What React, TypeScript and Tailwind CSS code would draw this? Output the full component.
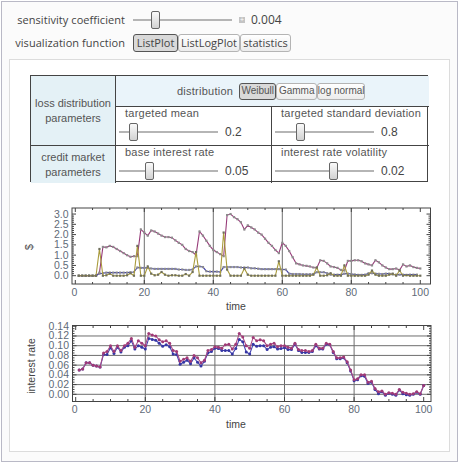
const lossY = [0,0,0,0,0,0,0.15,1.4,1.38,1.45,1.4,1.3,1.2,1.1,1,0.92,0.95,0.95,2.25,2.1,1.95,2.2,2.15,2.05,1.95,1.88,1.88,1.85,1.72,1.6,1.5,1.3,1.2,1.15,1,2.15,1.95,1.7,1.45,1.25,1.15,1.05,0.95,2.95,3,2.85,2.75,2.6,2.25,2.45,2.35,2.25,2.1,2,1.8,1.6,1.45,1.25,1.1,1.6,1.45,1.2,0.9,0.6,0.55,0.5,0.48,0.45,0.4,0.38,0.75,0.72,0.6,0.45,0.42,0.38,0.28,0.25,0.72,0.72,0.75,0.75,0.7,0.6,0.55,0.5,0.75,0.65,0.5,0.4,0.32,0.32,0.35,0.28,0.55,0.45,0.5,0.42,0.38,0.35]
const meanY = [0,0,0,0,0,0,0.1,0.12,0.15,0.15,0.15,0.15,0.15,0.15,0.15,0.17,0.18,0.4,0.38,0.38,0.38,0.35,0.33,0.33,0.33,0.33,0.33,0.33,0.33,0.3,0.3,0.28,0.28,0.3,0.45,0.45,0.42,0.22,0.2,0.2,0.2,0.18,0.42,0.42,0.42,0.42,0.42,0.4,0.4,0.4,0.36,0.36,0.34,0.32,0.32,0.32,0.32,0.32,0.32,0.3,0.3,0.1,0.08,0.08,0.08,0.07,0.07,0.07,0.08,0.17,0.17,0.17,0.12,0.05,0.05,0.05,0.05,0.1,0.1,0.08,0.06,0.04,0.04,0.05,0.12,0.12,0.1,0.09,0.08,0.1,0.1,0.06,0.05,0.05,0.05,0.04,0.05,0.05,0.05]
const spikeY = [0,0,0,0,0,0,1.3,0,0.02,0.1,0,0,0,0,0.02,0.12,0,1.45,0,0,0.45,0.1,0.02,0.05,0.18,0.05,0,0.02,0.02,0,0,0.08,0,0.18,1.15,0,0,0,0,0,0,0,2.1,0.3,0,0,0,0,0.35,0.05,0,0,0,0,0,0,0,0,0.7,0,0,0,0,0,0,0,0,0,0.05,0.4,0,0,0.02,0.12,0,0,0,0.5,0,0,0,0,0,0,0.05,0.25,0.05,0,0,0,0.05,0.1,0,0.25,0,0.02,0,0,0,0]
const rateRed = [0.05,0.052,0.065,0.065,0.06,0.058,0.056,0.085,0.088,0.1,0.088,0.1,0.09,0.1,0.105,0.115,0.097,0.11,0.105,0.1,0.125,0.122,0.12,0.112,0.108,0.11,0.105,0.09,0.088,0.068,0.072,0.075,0.068,0.08,0.075,0.065,0.07,0.09,0.092,0.098,0.097,0.095,0.102,0.103,0.093,0.103,0.125,0.118,0.1,0.095,0.117,0.11,0.112,0.11,0.1,0.103,0.105,0.098,0.1,0.1,0.097,0.095,0.105,0.092,0.09,0.09,0.088,0.09,0.103,0.095,0.095,0.105,0.103,0.088,0.075,0.075,0.077,0.067,0.05,0.03,0.032,0.04,0.04,0.025,0.027,0.012,0.005,0.007,0,0.003,0.002,0,0.01,0.004,0.002,0,0.001,0.005,0.001,0.018]
const rateBlue = [0.05,0.052,0.065,0.065,0.06,0.058,0.056,0.082,0.082,0.096,0.084,0.097,0.087,0.097,0.1,0.11,0.093,0.1,0.097,0.093,0.115,0.113,0.111,0.105,0.099,0.102,0.098,0.083,0.082,0.062,0.066,0.07,0.063,0.075,0.066,0.058,0.068,0.085,0.088,0.095,0.094,0.09,0.09,0.09,0.083,0.094,0.113,0.108,0.087,0.083,0.103,0.099,0.1,0.1,0.092,0.097,0.098,0.093,0.094,0.096,0.092,0.092,0.103,0.09,0.086,0.086,0.086,0.088,0.1,0.093,0.093,0.103,0.102,0.086,0.073,0.073,0.075,0.065,0.048,0.028,0.03,0.038,0.037,0.022,0.025,0.01,0.001,0.005,-0.002,0.002,0,-0.002,0.009,0.001,-0.001,-0.002,0,0.004,0,0.018]

const range = (from: number, to: number, step: number) => {
  const out: number[] = []
  for (let v = from; v <= to + 1e-6; v += step) out.push(v)
  return out
}

function Series({ data, px, py, line, dot, square }: { data: number[]; px: (t: number) => number; py: (v: number) => number; line: string; dot: string; square?: boolean }) {
  const pts = data.map((v, i) => [px(i + 1), py(v)])
  return (
    <>
      <polyline points={pts.map((p) => p.join(',')).join(' ')} fill="none" stroke={line} strokeWidth="1.1" />
      {pts.map((p, i) =>
        square ? (
          <rect key={i} x={p[0] - 1.1} y={p[1] - 1.1} width="2.2" height="2.2" fill={dot} />
        ) : (
          <circle key={i} cx={p[0]} cy={p[1]} r="1.5" fill={dot} />
        ),
      )}
    </>
  )
}

const tickFont = { fontFamily: '"Liberation Sans", sans-serif', fontSize: 10.5, fill: '#5f6b78' }

function LossChart() {
  const px = (t: number) => 75.3 + t * 3.45
  const py = (v: number) => 276.7 - v * 20.55
  return (
    <svg width="415" height="108" viewBox="20 205 415 108" className="block">
      {[20, 40, 60, 80].map((t) => (
        <line key={t} x1={px(t)} x2={px(t)} y1="209" y2="285" stroke="#6e6e6e" />
      ))}
      <Series data={lossY} px={px} py={py} line="#963a78" dot="#8c8c8c" square />
      <Series data={meanY} px={px} py={py} line="#4040a8" dot="#8c8c8c" square />
      <Series data={spikeY} px={px} py={py} line="#a99b3c" dot="#6f6f5c" square />
      <rect x="72" y="209" width="358.5" height="76" fill="none" stroke="#444" />
      {range(0, 100, 5).map((t) => (
        <g key={t} stroke="#444">
          <line x1={px(t)} x2={px(t)} y1="285" y2={t % 20 === 0 ? 281 : 283} />
          <line x1={px(t)} x2={px(t)} y1="209" y2={t % 20 === 0 ? 213 : 211} />
        </g>
      ))}
      {range(0, 3, 0.1).map((v, i) => (
        <g key={i} stroke="#444">
          <line x1="72" x2={i % 5 === 0 ? 76 : 74} y1={py(v)} y2={py(v)} />
          <line x1="430.5" x2={i % 5 === 0 ? 426.5 : 428.5} y1={py(v)} y2={py(v)} />
        </g>
      ))}
      {[0, 0.5, 1, 1.5, 2, 2.5, 3].map((v) => (
        <text key={v} x="68.5" y={py(v) + 3.5} textAnchor="end" style={tickFont}>{v.toFixed(1)}</text>
      ))}
      {[0, 20, 40, 60, 80, 100].map((t) => (
        <text key={t} x={px(t) - (t === 0 ? 1 : 0)} y="297" textAnchor="middle" style={tickFont}>{t}</text>
      ))}
      <text x="236" y="311" textAnchor="middle" style={{ ...tickFont, fill: '#444' }}>time</text>
      <text transform="translate(33 248) rotate(-90)" textAnchor="middle" style={{ ...tickFont, fill: '#444' }}>$</text>
    </svg>
  )
}

function RateChart() {
  const px = (t: number) => 75.7 + t * 3.48
  const py = (v: number) => 395.3 - v * 486
  return (
    <svg width="415" height="108" viewBox="20 322 415 108" className="block">
      {[20, 40, 60, 80].map((t) => (
        <line key={t} x1={px(t)} x2={px(t)} y1="326" y2="402" stroke="#6e6e6e" />
      ))}
      {range(0, 0.12, 0.02).map((v) => (
        <line key={v} x1="72" x2="431" y1={py(v)} y2={py(v)} stroke="#6e6e6e" />
      ))}
      <Series data={rateBlue} px={px} py={py} line="#4444b0" dot="#3636a4" />
      <Series data={rateRed} px={px} py={py} line="#a84a86" dot="#a03a76" />
      <rect x="72.5" y="326.5" width="358.5" height="76" fill="none" stroke="#444" />
      {range(0, 100, 5).map((t) => (
        <g key={t} stroke="#444">
          <line x1={px(t)} x2={px(t)} y1="402" y2={t % 20 === 0 ? 398 : 400} />
          <line x1={px(t)} x2={px(t)} y1="327" y2={t % 20 === 0 ? 331 : 329} />
        </g>
      ))}
      {range(0, 0.14, 0.005).map((v, i) => (
        <g key={i} stroke="#444">
          <line x1="72.5" x2={i % 4 === 0 ? 76.5 : 74.5} y1={py(v)} y2={py(v)} />
          <line x1="431" x2={i % 4 === 0 ? 427 : 429} y1={py(v)} y2={py(v)} />
        </g>
      ))}
      {range(0, 0.14, 0.02).map((v) => (
        <text key={v} x="69" y={py(v) + 3.5} textAnchor="end" style={tickFont}>{v.toFixed(2)}</text>
      ))}
      {[0, 20, 40, 60, 80, 100].map((t) => (
        <text key={t} x={px(t) - (t === 0 ? 1 : 0)} y="414" textAnchor="middle" style={tickFont}>{t}</text>
      ))}
      <text x="236" y="429" textAnchor="middle" style={{ ...tickFont, fill: '#444' }}>time</text>
      <text transform="translate(35 367) rotate(-90)" textAnchor="middle" style={{ ...tickFont, fill: '#444' }}>interest rate</text>
    </svg>
  )
}

function Slider({ thumb }: { thumb: number }) {
  return (
    <div className="relative h-[18px] w-[99px] shrink-0">
      <div className="absolute left-0 right-0 top-[8px] h-[2px] bg-[#b5b5b5]" />
      <div className="absolute top-0 h-[18px] w-[9px] rounded-[2px] border border-[#666] bg-gradient-to-b from-[#fafafa] to-[#d2d2d2]" style={{ left: thumb }} />
    </div>
  )
}

function Tab({ label, active, className }: { label: string; active?: boolean; className: string }) {
  return (
    <div
      className={`flex items-center justify-center whitespace-nowrap rounded-[3px] border ${
        active ? 'border-[#555] bg-[#d9d9d9]' : 'border-[#b4b4b4] bg-gradient-to-b from-white to-[#ececec]'
      } ${className}`}
    >
      {label}
    </div>
  )
}

function SliderCell({ label, thumb, value, className }: { label: string; thumb: number; value: string; className?: string }) {
  return (
    <div className={`flex flex-col pl-[3px] ${className ?? ''}`}>
      <div className="ml-[6px] h-[12px] whitespace-nowrap text-[11px] leading-[12px] tracking-[0.25px] text-[#555]">{label}</div>
      <div className="mt-[4px] flex items-center gap-[7px]">
        <Slider thumb={thumb} />
        <span className="text-[12px] leading-[18px] text-[#444]">{value}</span>
      </div>
    </div>
  )
}

export default function App() {
  return (
    <div className="h-[463px] w-[459px] bg-white p-[1px] font-['Open_Sans',sans-serif]">
      <div className="h-[461px] w-[457px] border border-[#b9b9c6] bg-[#fbfbfb]">
        {/* controls */}
        <div className="flex h-[31px] items-center pt-[4px] text-[11px] leading-none tracking-[0.05px] text-[#444]">
          <div className="w-[123px] whitespace-nowrap text-right">sensitivity coefficient</div>
          <div className="ml-[8px]">
            <Slider thumb={18} />
          </div>
          <div className="ml-[7px] flex h-[6px] w-[6px] items-center justify-center bg-[#c4c4c4] text-[7px] leading-none text-white">+</div>
          <div className="ml-[6px] text-[12px] tracking-normal">0.004</div>
        </div>
        <div className="flex h-[19px] items-center text-[11px] leading-none tracking-[0.05px] text-[#444]">
          <div className="w-[123px] whitespace-nowrap text-right">visualization function</div>
          <div className="ml-[8px] flex h-[18px] tracking-normal">
            <Tab label="ListPlot" active className="w-[45px]" />
            <Tab label="ListLogPlot" className="w-[62px]" />
            <Tab label="statistics" className="w-[51px]" />
          </div>
        </div>

        {/* output panel */}
        <div className="ml-[7px] mt-[7px] h-[393px] w-[441px] border border-[#dcdcdc] bg-white pl-[20px] pt-[15px] font-['Liberation_Sans',sans-serif]">
          <div className="grid h-[107px] w-[398px] grid-cols-[85px_156px_157px] grid-rows-[31px_38px_38px] border border-[#444]">
            <div className="row-span-2 flex items-center justify-center border-r border-[#444] bg-[#e4f1f6] text-center text-[11px] leading-[14.5px] text-[#555]">
              loss distribution<br />parameters
            </div>
            <div className="col-span-2 flex items-center border-b border-[#444] bg-[#eaf4fa] pl-[61px] text-[11px] text-[#555]">
              <span className="tracking-[0.25px]">distribution</span>
              <div className="ml-[6px] flex h-[17px] text-[10px] leading-none">
                <Tab label="Weibull" active className="w-[37px]" />
                <Tab label="Gamma" className="w-[41px]" />
                <Tab label="log normal" className="w-[48px]" />
              </div>
            </div>
            <SliderCell label="targeted mean" thumb={10} value="0.2" className="border-r border-[#444]" />
            <SliderCell label="targeted standard deviation" thumb={21} value="0.8" />
            <div className="flex items-center justify-center border-r border-t border-[#444] bg-[#e4f1f6] text-center text-[11px] leading-[14.5px] text-[#555]">
              credit market<br />parameters
            </div>
            <SliderCell label="base interest rate" thumb={26} value="0.05" className="border-r border-t border-[#444]" />
            <SliderCell label="interest rate volatility" thumb={54} value="0.02" className="border-t border-[#444]" />
          </div>
          <div className="-ml-[10px] mt-[22px] flex flex-col gap-[9px]">
            <LossChart />
            <RateChart />
          </div>
        </div>
      </div>
    </div>
  )
}
